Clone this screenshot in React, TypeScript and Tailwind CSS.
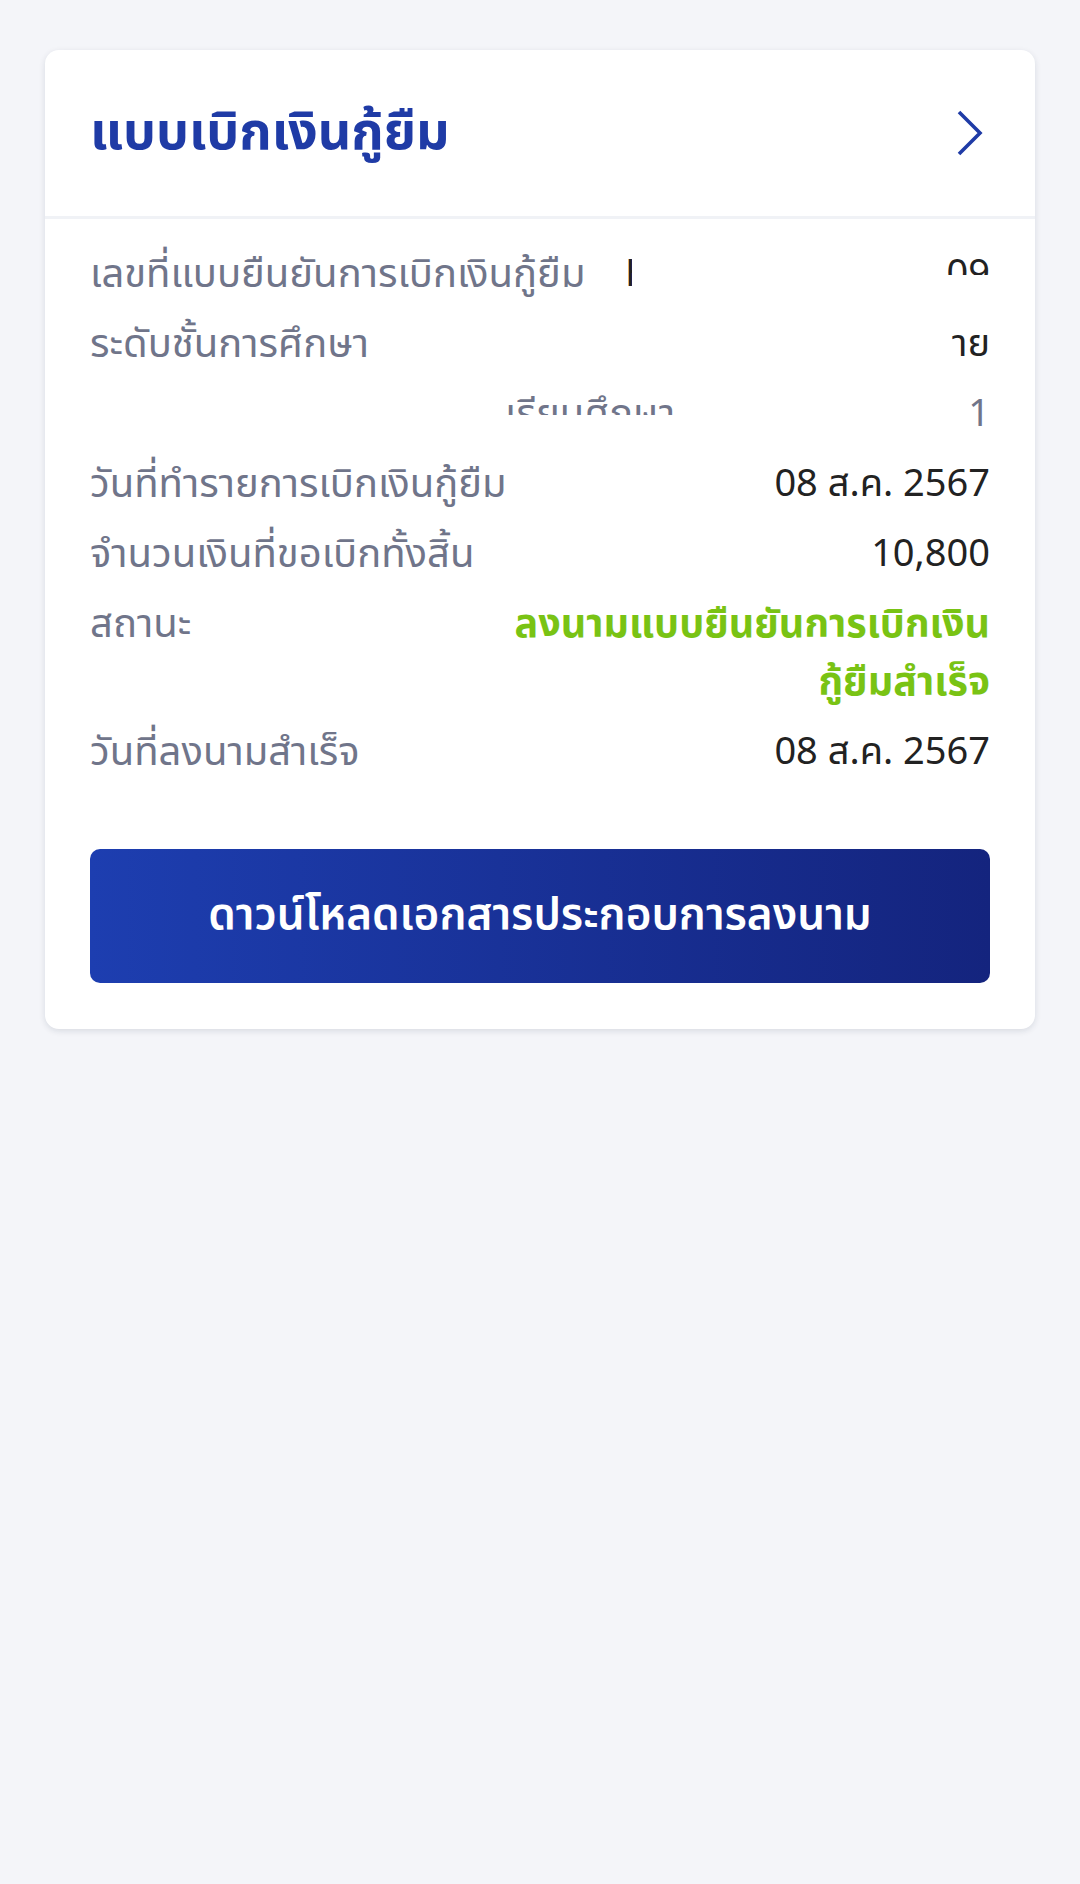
const rows = [
  { label: 'วันที่ทำรายการเบิกเงินกู้ยืม', value: '08 ส.ค. 2567' },
  { label: 'จำนวนเงินที่ขอเบิกทั้งสิ้น', value: '10,800' },
];

export default function App() {
  return (
    <div
      className="min-h-[1884px] w-[1080px] bg-[#f4f5f9] pt-[50px] px-[45px]"
      style={{ fontFamily: '"Noto Sans Thai", "Noto Sans", "DejaVu Sans", sans-serif' }}
    >
      <div className="bg-white rounded-[14px] shadow-[0_2px_6px_rgba(20,30,60,0.12)] overflow-hidden">
        {/* Header */}
        <div className="h-[169px] px-[45px] flex items-center justify-between border-b-[3px] border-[#f0f2f6]">
          <h1 className="text-[52px] font-bold text-[#1f3ba6] leading-none">แบบเบิกเงินกู้ยืม</h1>
          <svg width="30" height="48" viewBox="0 0 30 48" fill="none" className="mr-[5px]">
            <polyline points="4,3 25,24 4,45" stroke="#1f3ba6" strokeWidth="3.6" strokeLinecap="butt" strokeLinejoin="miter" />
          </svg>
        </div>

        {/* Details */}
        <div className="px-[45px] pt-[27px] pb-[46px] text-[38px]">
          <div className="flex flex-col gap-[12px]">
            <div className="flex leading-[58px] h-[58px]">
              <span className="w-[535px] shrink-0 text-[40px] text-[#70758a] whitespace-nowrap">เลขที่แบบยืนยันการเบิกเงินกู้ยืม</span>
              <span className="flex-1 flex justify-between text-[#222]">
                <span className="inline-block w-[7px] h-[58px] overflow-hidden">H</span>
                <span className="inline-block h-[29px] overflow-hidden">09</span>
              </span>
            </div>
            <div className="flex leading-[58px] h-[58px]">
              <span className="w-[560px] shrink-0 text-[40px] text-[#70758a]">ระดับชั้นการศึกษา</span>
              <span className="flex-1 flex justify-between text-[#222]">
                <span className="inline-block w-[12px] h-[30px] overflow-hidden">้</span>
                <span>าย</span>
              </span>
            </div>
            <div className="flex justify-between leading-[58px] h-[58px]">
              <span className="inline-block h-[29px] overflow-hidden pl-[415px] text-[40px] text-[#70758a]">เรียนศึกษา</span>
              <span className="text-[#70758a]">1</span>
            </div>
            {rows.map((r) => (
              <div key={r.label} className="flex justify-between leading-[58px]">
                <span className="text-[40px] text-[#70758a]">{r.label}</span>
                <span className="text-[#222]">{r.value}</span>
              </div>
            ))}
            <div className="flex justify-between leading-[58px]">
              <span className="text-[40px] text-[#70758a]">สถานะ</span>
              <span className="text-right text-[39.5px] font-bold text-[#79c314]">
                ลงนามแบบยืนยันการเบิกเงิน
                <br />
                กู้ยืมสำเร็จ
              </span>
            </div>
            <div className="flex justify-between leading-[58px]">
              <span className="text-[40px] text-[#70758a]">วันที่ลงนามสำเร็จ</span>
              <span className="text-[#222]">08 ส.ค. 2567</span>
            </div>
          </div>

          <button className="mt-[67px] w-full h-[134px] rounded-[10px] bg-gradient-to-r from-[#1d3eb0] to-[#14247e] text-white text-[44px] font-semibold">
            ดาวน์โหลดเอกสารประกอบการลงนาม
          </button>
        </div>
      </div>
    </div>
  );
}
